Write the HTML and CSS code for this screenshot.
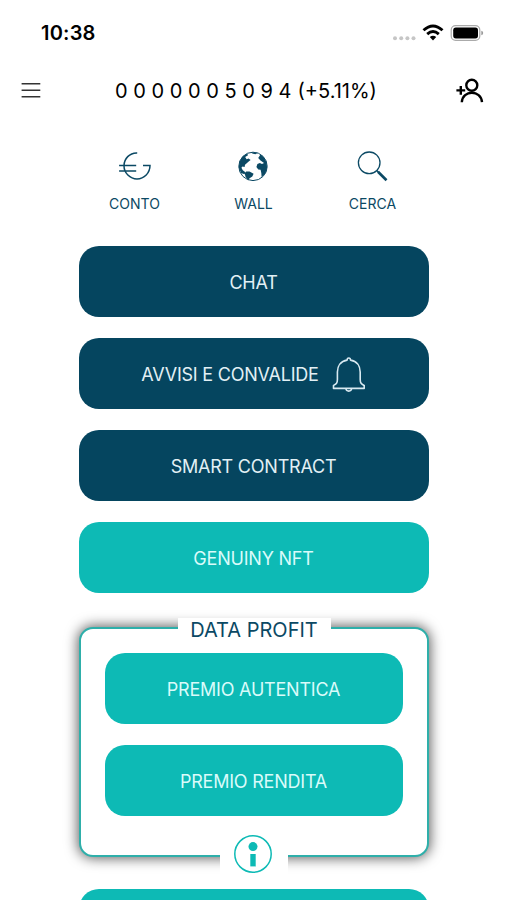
FILE: index.html
```html
<!DOCTYPE html>
<html lang="it">
<head>
<meta charset="utf-8">
<meta name="viewport" content="width=device-width, initial-scale=1">
<title>Home</title>
<link rel="stylesheet" href="styles.css">
</head>
<body>
<div class="screen">
  <div class="status">
    <span class="time">10:38</span>
    <svg class="status-icons" width="92" height="20" viewBox="392 23 92 20">
      <g fill="#c6c6c6"><circle cx="395" cy="38.3" r="2"/><circle cx="401.2" cy="38.3" r="2"/><circle cx="407.4" cy="38.3" r="2"/><circle cx="413.5" cy="38.3" r="2"/></g>
      <g fill="none" stroke="#000" stroke-width="2.9"><path d="M423.5 30.3Q433 21.7 442.5 30.3"/><path d="M427.2 34.2Q433 29 438.8 34.2"/></g>
      <path d="M429.8 37Q433 34.6 436.2 37L433 40.4Z"/>
      <rect x="451.2" y="25.6" width="28.6" height="14.8" rx="4.4" fill="#fff" stroke="#aaa" stroke-width="1.2"/>
      <rect x="453.2" y="27.6" width="24.8" height="10.8" rx="2.6"/>
      <path d="M481.3 30.7Q483.2 31.3 483.2 33T481.3 35.3Z" fill="#999"/>
    </svg>
  </div>
  <header class="header">
    <svg class="menu" width="20" height="18" viewBox="0 0 20 18" stroke="#333" stroke-width="1.5"><path d="M.6 1.7H19.3M.6 8.3H19.3M.6 14.8H19.3"/></svg>
    <h1 class="account"><span class="digits">0 0 0 0 0 0 5 0 9 4</span><span class="rate">(+5.11%)</span></h1>
    <svg class="add" width="29" height="26" viewBox="456 78 29 26" fill="none" stroke="#000" stroke-width="2.4"><circle cx="471.8" cy="85.3" r="5.5"/><path d="M461.8 102.2C462.5 89.5 481.2 89.5 482 102.2M456.4 90.4H465.2M460.8 86V94.8"/></svg>
  </header>
  <nav class="nav">
    <a class="nav-item conto">
      <svg width="34" height="32" viewBox="118 150 34 32" fill="none" stroke="#0b4964" stroke-width="1.5"><path d="M137.2 152.9C129.5 152.5 124 159 124 165.7C124 173 130 179 137 179C144.2 179 150 173 150 165.6H143M119.1 165.6H136.2M119.1 171H136.2"/></svg>
      <span>CONTO</span>
    </a>
    <a class="nav-item">
      <svg width="34" height="32" viewBox="236 150 34 32" fill="#0b4964">
        <circle cx="253" cy="166.4" r="14.2" fill="#fff" stroke="#0b4964" stroke-width="1"/>
        <path d="M247.3 153.4L242.3 156.8L239.6 161.5L238.8 167.5L241 173L244.5 174.3L245.4 172.2L242.8 170.3L241.4 167.8L242.5 166.4L244.6 167L245 164.8L247 163L249 161.2L250.6 160L248.6 158.4L246.6 159.3L245.2 157L248 155.3Z"/>
        <path d="M246.2 171.4L249.5 171.5L253.6 173.7L252.3 176.4L249.6 178.2L248.2 180.2L245.5 176.8L244.7 173.2Z"/>
        <path d="M250.5 152.4H257.8L255.5 154.2L253 153.7Z"/>
        <path d="M258.2 158L260.5 154.5L263.8 157.2L266.5 162.2L267.1 167.8L265.3 173.4L261.6 177.1L261.3 173L260.6 169.8L258.3 169.5L256.4 167L257.4 163.9L259.8 163L262 164L264 163L260.5 160.5Z"/>
      </svg>
      <span>WALL</span>
    </a>
    <a class="nav-item">
      <svg width="34" height="32" viewBox="355 150 34 32" fill="none" stroke="#0b4964"><circle cx="369.2" cy="162.8" r="10.8" stroke-width="1.3"/><path d="M376.7 170.5L378.5 172.3" stroke-width="1.3"/><path d="M378 171.8L386.5 180.2" stroke-width="2.7"/></svg>
      <span>CERCA</span>
    </a>
  </nav>
  <main class="actions">
    <button class="btn dark"><span>CHAT</span></button>
    <button class="btn dark with-icon">
      <span>AVVISI E CONVALIDE</span>
      <svg width="34" height="36" viewBox="332 355 34 36" fill="none" stroke="#d8e9f1" stroke-width="1.6" stroke-linejoin="round"><path d="M347.1 359.1C347.1 356.2 350.5 356.2 350.5 359.1C357 360.2 360.2 365.2 360.2 371V378.5C360.2 382.5 361.6 383 364.2 384.5V387.4H333.5V384.5C336 383 337.4 382.5 337.4 378.5V371C337.4 365.2 340.6 360.2 347.1 359.1Z"/><path d="M345.9 387.5C346.3 391 351.2 391 351.6 387.5"/></svg>
    </button>
    <button class="btn dark"><span>SMART CONTRACT</span></button>
    <button class="btn teal"><span>GENUINY NFT</span></button>
    <section class="panel">
      <h2 class="panel-title"><span>DATA PROFIT</span></h2>
      <button class="btn teal"><span>PREMIO AUTENTICA</span></button>
      <button class="btn teal"><span>PREMIO RENDITA</span></button>
      <div class="info">
        <svg width="40" height="40" viewBox="0 0 40 40"><circle cx="20" cy="20" r="18.2" fill="#fff" stroke="#0dbab5" stroke-width="1.5"/><circle cx="20" cy="12.6" r="4.5" fill="#0dbab5"/><path d="M17.3 20H22.7V32.4H17.3Z" fill="#0dbab5"/></svg>
      </div>
    </section>
    <button class="btn teal"></button>
  </main>
</div>
</body>
</html>
```
FILE: styles.css
```css
* { box-sizing: border-box; }
body {
  margin: 0;
  background: #fff;
  color: #000;
  font-family: Inter, "Liberation Sans", sans-serif;
}
.screen { height: 900px; overflow: hidden; }
.screen svg { display: block; flex: none; }
.status {
  height: 66px;
  padding: 0 23px 0 41px;
  display: flex;
  align-items: center;
  justify-content: space-between;
}
.time { font-size: 20px; font-weight: 600; letter-spacing: .2px; }
.header {
  height: 50px;
  padding: 0 22px 0 21px;
  display: flex;
  align-items: center;
  justify-content: space-between;
}
.account {
  margin: 0 5px 0 0;
  display: flex;
  gap: 6px;
  font-size: 20px;
  font-weight: 400;
  white-space: nowrap;
}
.nav {
  width: 357px;
  height: 130px;
  margin: 0 auto;
  padding-top: 34px;
  display: grid;
  grid-template-columns: repeat(3, 1fr);
}
.nav-item {
  display: flex;
  flex-direction: column;
  align-items: center;
  gap: 13px;
  color: #0b4964;
  font-size: 14px;
  line-height: 17px;
}
.nav-item svg { margin-right: 2px; }
.conto svg { margin-right: 0; }
.actions {
  width: 350px;
  margin: 0 auto;
  display: flex;
  flex-direction: column;
  gap: 21px;
}
.btn {
  width: 100%;
  height: 71px;
  flex: none;
  padding: 2px 0 0;
  border: 0;
  border-radius: 20px;
  display: flex;
  align-items: center;
  justify-content: center;
  font: 18px/22px Inter, "Liberation Sans", sans-serif;
  letter-spacing: -.22px;
  white-space: nowrap;
}
.dark { background: #05455f; color: #e2f0f5; }
.teal { background: #0dbab5; color: #d9fbfa; }
.with-icon { gap: 13px; }
.with-icon svg { margin-bottom: 2px; }
.panel {
  position: relative;
  height: 230px;
  margin: 13px 0 11px;
  padding: 24px 24px 0;
  display: flex;
  flex-direction: column;
  gap: 21px;
  border: 2px solid #2eafaa;
  border-radius: 14px;
  background: #fff;
  box-shadow: 0 0 13px 1px rgba(0, 0, 0, .65);
}
.panel-title {
  position: absolute;
  top: -11px;
  left: 97px;
  width: 153px;
  height: 25px;
  margin: 0;
  background: #fff;
  color: #0b4964;
  font-size: 20px;
  font-weight: 400;
  line-height: 25px;
  text-align: center;
}
.info {
  position: absolute;
  left: 139px;
  bottom: -20px;
  width: 68px;
  height: 41px;
  display: flex;
  justify-content: center;
  background: #fff;
}
.info svg { margin-right: 1px; }
```
